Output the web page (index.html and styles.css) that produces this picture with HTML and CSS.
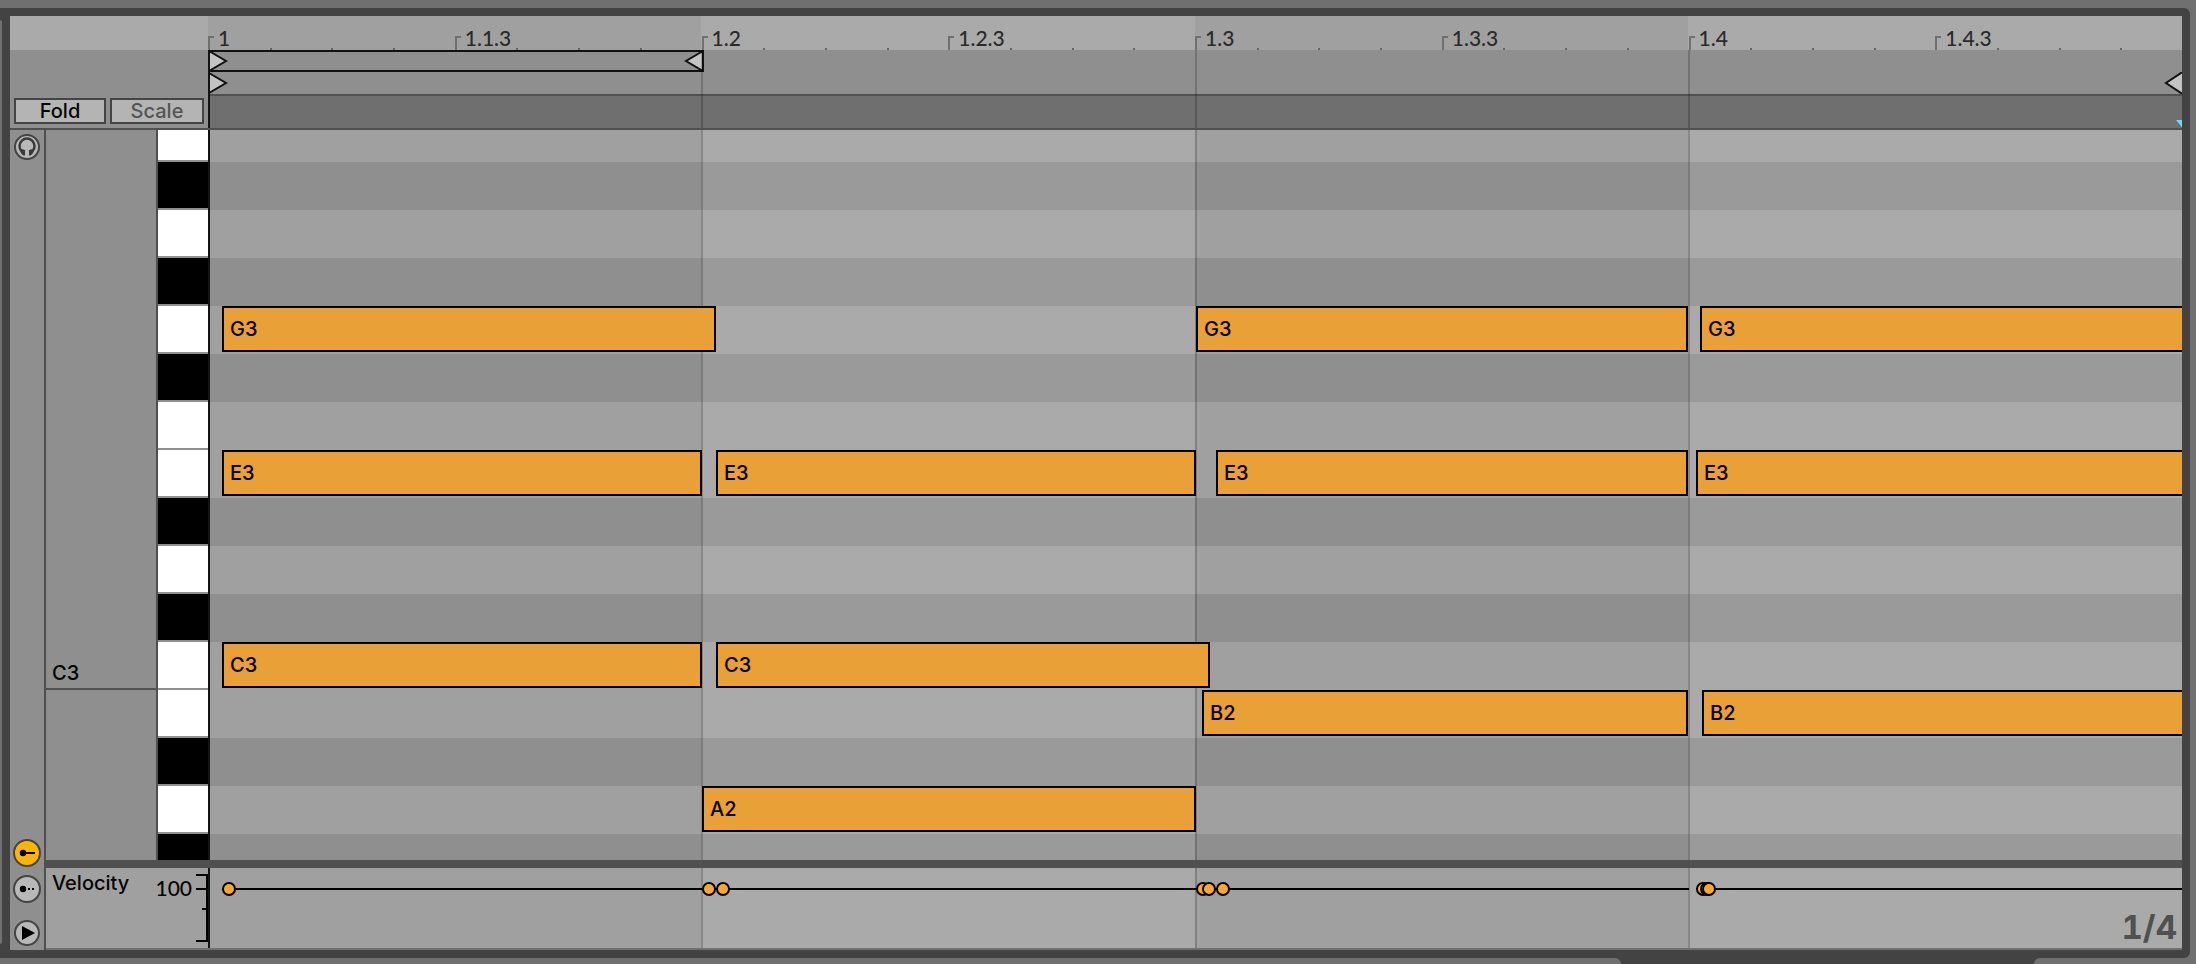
FILE: index.html
```html
<!DOCTYPE html>
<html lang="en">
<head>
<meta charset="utf-8">
<meta name="viewport" content="width=device-width, initial-scale=1">
<title>MIDI Note Editor</title>
<link rel="stylesheet" href="styles.css">
</head>
<body>
<main class="frame">
  <div class="editor">
    <header class="head">
      <div class="head-side">
        <div class="head-blank"></div>
        <div class="head-tools">
          <button type="button" class="toggle">Fold</button>
          <button type="button" class="toggle toggle-dim">Scale</button>
        </div>
      </div>
      <div class="head-time">
        <ol class="ruler">
          <li class="major">1</li><li></li><li></li><li></li>
          <li class="major">1.1.3</li><li></li><li></li><li></li>
          <li class="major">1.2</li><li></li><li></li><li></li>
          <li class="major">1.2.3</li><li></li><li></li><li></li>
          <li class="major">1.3</li><li></li><li></li><li></li>
          <li class="major">1.3.3</li><li></li><li></li><li></li>
          <li class="major">1.4</li><li></li><li></li><li></li>
          <li class="major">1.4.3</li><li></li><li></li><li></li>
        </ol>
        <div class="zones">
          <div class="loop">
            <svg class="marker" viewBox="0 0 20 22"><path d="M1 1L18 11L1 21Z"/></svg>
            <svg class="marker" viewBox="0 0 20 22"><path d="M19 1L2 11L19 21Z"/></svg>
          </div>
          <div class="clip-range">
            <svg class="marker" viewBox="0 0 20 22"><path d="M1 1L18 11L1 21Z"/></svg>
            <svg class="marker" viewBox="0 0 20 22"><path d="M22 -1L4 11L22 23"/></svg>
          </div>
          <div class="scrub">
            <svg class="insert-mark" viewBox="0 0 6 8"><path d="M0 0H6V7.5Z"/></svg>
          </div>
        </div>
      </div>
    </header>

    <div class="body">
      <nav class="rail">
        <button type="button" class="round" aria-label="Preview">
          <svg viewBox="0 0 28 28"><circle class="rim" cx="14" cy="14" r="12"/><path class="cans" d="M8.200 17.800A7.500 7.500 0 1 1 19.800 17.800"/><path class="cups" d="M6.500 15.500L12 17V22.500H10.500C8.500 21.500 7 19 6.500 15.500ZM21.500 15.500L16 17V22.500H17.500C19.500 21.500 21 19 21.500 15.500Z"/></svg>
        </button>
        <button type="button" class="round push" aria-label="Show velocity lane">
          <svg viewBox="0 0 28 28"><circle class="rim on" cx="14" cy="14" r="13"/><circle cx="10" cy="14" r="3.200"/><path d="M10 13H22V15H10Z"/></svg>
        </button>
        <button type="button" class="round" aria-label="Show chance lane">
          <svg viewBox="0 0 28 28"><circle class="rim" cx="14" cy="14" r="13"/><circle cx="10" cy="14" r="3.200"/><path d="M15 13H17V15H15ZM19 13H21V15H19Z"/></svg>
        </button>
        <button type="button" class="round apart" aria-label="Play">
          <svg viewBox="0 0 28 28"><circle class="rim" cx="14" cy="14" r="12"/><path d="M9 7L22 14L9 21Z"/></svg>
        </button>
      </nav>

      <div class="main">
        <section class="roll">
          <div class="octaves"><div class="octave">C3</div></div>
          <div class="keys">
            <i class="cut"></i><i class="black"></i><i></i><i class="black"></i><i></i><i class="black"></i><i></i><i></i><i class="black"></i><i></i><i class="black"></i><i></i><i></i><i class="black"></i><i></i><i class="black"></i>
          </div>
          <div class="lanes">
            <div class="lane cut"></div>
            <div class="lane sharp"></div>
            <div class="lane"></div>
            <div class="lane sharp"></div>
            <div class="lane">
              <div class="note" style="--at:14;--len:494">G3</div>
              <div class="note" style="--at:988;--len:492">G3</div>
              <div class="note open" style="--at:1492;--len:482">G3</div>
            </div>
            <div class="lane sharp"></div>
            <div class="lane"></div>
            <div class="lane">
              <div class="note" style="--at:14;--len:480">E3</div>
              <div class="note" style="--at:508;--len:480">E3</div>
              <div class="note" style="--at:1008;--len:472">E3</div>
              <div class="note open" style="--at:1488;--len:486">E3</div>
            </div>
            <div class="lane sharp"></div>
            <div class="lane"></div>
            <div class="lane sharp"></div>
            <div class="lane">
              <div class="note" style="--at:14;--len:480">C3</div>
              <div class="note" style="--at:508;--len:494">C3</div>
            </div>
            <div class="lane">
              <div class="note" style="--at:994;--len:486">B2</div>
              <div class="note open" style="--at:1494;--len:480">B2</div>
            </div>
            <div class="lane sharp"></div>
            <div class="lane">
              <div class="note" style="--at:494;--len:494">A2</div>
            </div>
            <div class="lane sharp"></div>
          </div>
        </section>

        <section class="velocity">
          <div class="velocity-side">
            <span class="velocity-name">Velocity</span>
            <span class="velocity-value">100</span>
            <svg class="axis" viewBox="0 0 12 80"><path d="M0 7H11V73H0M0 21H11M6 41H11"/></svg>
          </div>
          <div class="velocity-time">
            <div class="stem" style="--at:14;--len:1467"></div>
            <div class="stem" style="--at:1488;--len:486"></div>
            <i class="dot" style="--at:14"></i>
            <i class="dot" style="--at:494"></i>
            <i class="dot" style="--at:508"></i>
            <i class="dot" style="--at:988"></i>
            <i class="dot" style="--at:994"></i>
            <i class="dot" style="--at:1008"></i>
            <i class="dot" style="--at:1488"></i>
            <i class="dot" style="--at:1492"></i>
            <i class="dot" style="--at:1494"></i>
            <span class="grid-size">1/4</span>
          </div>
        </section>
      </div>
    </div>
  </div>
</main>
<footer class="below"><div class="below-left"></div><div class="below-right"></div></footer>
</body>
</html>
```

FILE: styles.css
```css
:root {
  --shell: #707070;
  --frame: #434343;
  --rule: #505050;
  --panel: #8f8f8f;
  --light: #a0a0a0;
  --lighter: #aaaaaa;
  --ink: #050505;
  --units: 1974;
  --beat-tint: linear-gradient(to right,
    transparent 25%, rgba(255, 255, 255, .1) 25% 50%,
    transparent 50% 75%, rgba(255, 255, 255, .1) 75%);
  --beat-lines: linear-gradient(to right,
    #141414 2px, transparent 2px 25%,
    rgba(0, 0, 0, .2) 25% calc(25% + 2px), transparent calc(25% + 2px) 50%,
    rgba(0, 0, 0, .2) 50% calc(50% + 2px), transparent calc(50% + 2px) 75%,
    rgba(0, 0, 0, .2) 75% calc(75% + 2px), transparent calc(75% + 2px));
}

* { box-sizing: border-box; }

body {
  margin: 0;
  height: 100vh;
  display: flex;
  flex-direction: column;
  background: var(--shell);
  color: var(--ink);
  font: 500 20px/24px Inter, "Liberation Sans", sans-serif;
}

button { font: inherit; color: inherit; padding: 0; margin: 0; cursor: pointer; }

svg { display: block; }

/* Outer frame */
.frame {
  flex: 1;
  min-height: 0;
  display: flex;
  position: relative;
  margin: 8px 6px 0 0;
  padding: 8px 8px 8px 10px;
  background: var(--frame);
  border-radius: 0 6px 6px 0;
}

.frame::before {
  content: "";
  position: absolute;
  left: 0;
  top: 12px;
  bottom: 14px;
  width: 2px;
  background: var(--shell);
  border-radius: 0 2px 2px 0;
}

.editor {
  flex: 1;
  min-width: 0;
  display: flex;
  flex-direction: column;
  background: var(--panel);
}

.below { display: flex; justify-content: space-between; height: 6px; background: var(--frame); }
.below-left { width: 73.8%; background: var(--shell); border-radius: 0 6px 0 0; }
.below-right { width: 162px; background: var(--shell); border-radius: 6px 0 0 0; }

/* Header */
.head { display: flex; border-bottom: 2px solid var(--rule); }
.head-side { width: 198px; display: flex; flex-direction: column; }
.head-blank { height: 34px; background: var(--lighter); }

.head-tools {
  flex: 1;
  display: grid;
  grid-template-columns: 92px 1fr;
  align-items: end;
  gap: 4px;
  padding: 4px;
}

.toggle {
  height: 26px;
  line-height: 22px;
  border: 2px solid #444;
  background: #b4b4b4;
}

.toggle-dim { color: #555; }

.head-time { flex: 1; min-width: 0; }

.ruler {
  display: grid;
  grid-template-columns: repeat(32, 1fr);
  height: 34px;
  margin: 0;
  padding: 0;
  list-style: none;
  background: var(--beat-tint) var(--light);
  color: #2a2a2a;
  font-family: Lato, sans-serif;
  font-size: 21px;
}

.ruler li {
  position: relative;
  min-width: 0;
  padding: 10px 0 0 10px;
  white-space: nowrap;
}

.ruler li::before {
  content: "";
  position: absolute;
  left: 0;
  bottom: 0;
  width: 2px;
  height: 2px;
  background: #666;
}

.ruler .major::before {
  width: 4px;
  height: 12px;
  background: none;
  border: solid #707070;
  border-width: 2px 0 0 2px;
}

.zones { position: relative; }

.zones::after {
  content: "";
  position: absolute;
  inset: 0;
  background: var(--beat-lines);
  pointer-events: none;
}

.loop, .clip-range { display: flex; justify-content: space-between; height: 22px; }

.loop {
  width: calc(25% + 2px);
  box-shadow: inset 0 0 0 2px #111;
}

.marker { width: 20px; height: 22px; fill: #c4c4c4; stroke: #111; stroke-width: 2; }

.scrub {
  display: flex;
  justify-content: flex-end;
  align-items: flex-end;
  height: 34px;
  border-top: 2px solid var(--rule);
  background: #6f6f6f;
}

.insert-mark { width: 6px; height: 8px; fill: #5fe0f5; }

/* Left rail */
.body { flex: 1; min-height: 0; display: flex; }

.rail {
  width: 36px;
  padding: 3px;
  display: flex;
  flex-direction: column;
  gap: 8px;
  border-right: 2px solid var(--rule);
}

.round { width: 28px; height: 28px; border: 0; background: none; }
.push { margin-top: auto; }
.apart { margin-top: 8px; }
.rim { fill: #b8b8b8; stroke: #444; stroke-width: 2; }
.on { fill: #ffb400; }
.cans { fill: none; stroke: #3a3a3a; stroke-width: 2.5; }
.cups { fill: #3a3a3a; }

/* Piano roll */
.main { flex: 1; min-width: 0; display: flex; flex-direction: column; }

.roll {
  flex: 1;
  min-height: 0;
  display: flex;
  overflow: hidden;
  border-bottom: 8px solid var(--rule);
}

.octaves { width: 110px; }

.octave {
  display: flex;
  align-items: flex-end;
  height: 560px;
  padding: 0 6px 3px;
  border-bottom: 2px solid var(--rule);
}

.keys { width: 52px; border-left: 2px solid var(--rule); }

.keys i {
  display: block;
  height: 48px;
  background: #fff;
  border-bottom: 2px solid var(--panel);
}

.keys .black { background: #000; }

.lanes { position: relative; flex: 1; min-width: 0; overflow: hidden; }

.lanes::before {
  content: "";
  position: absolute;
  inset: 0;
  background: var(--beat-lines), var(--beat-tint);
}

.lane {
  display: grid;
  grid-template: 46px / 1fr;
  height: 48px;
  background: var(--light);
}

.sharp { background: var(--panel); }
.keys .cut, .lane.cut { height: 32px; }

.note {
  grid-area: 1 / 1;
  position: relative;
  z-index: 1;
  margin-left: calc(var(--at) / var(--units) * 100%);
  width: calc(var(--len) / var(--units) * 100%);
  padding: 0 6px;
  border: 2px solid #000;
  background: #e9a036;
  line-height: 42px;
}

.open { border-right: 0; }

/* Velocity lane */
.velocity {
  display: flex;
  height: 82px;
  border-bottom: 2px solid var(--shell);
  background: var(--light);
}

.velocity-side { width: 162px; display: flex; justify-content: space-between; padding-left: 6px; }
.velocity-name { flex: 1; padding-top: 3px; }
.velocity-value { padding: 8px 4px 0 0; font-family: Lato, sans-serif; font-size: 21px; }
.axis { width: 12px; height: 80px; fill: none; stroke: #000; stroke-width: 2; }

.velocity-time {
  position: relative;
  flex: 1;
  min-width: 0;
  display: flex;
  justify-content: flex-end;
  align-items: flex-end;
  padding: 0 5px 1px 0;
  background: var(--beat-lines), var(--beat-tint);
}

.stem, .dot { position: absolute; left: calc(var(--at) / var(--units) * 100%); }

.stem {
  top: 20px;
  width: calc(var(--len) / var(--units) * 100%);
  height: 2px;
  background: #000;
}

.dot {
  top: 14px;
  width: 14px;
  height: 14px;
  border: 2px solid #000;
  border-radius: 50%;
  background: #ffa726;
}

.grid-size {
  font-size: 33px;
  line-height: 40px;
  font-weight: 700;
  font-variant-numeric: tabular-nums;
  color: #505050;
}
```
